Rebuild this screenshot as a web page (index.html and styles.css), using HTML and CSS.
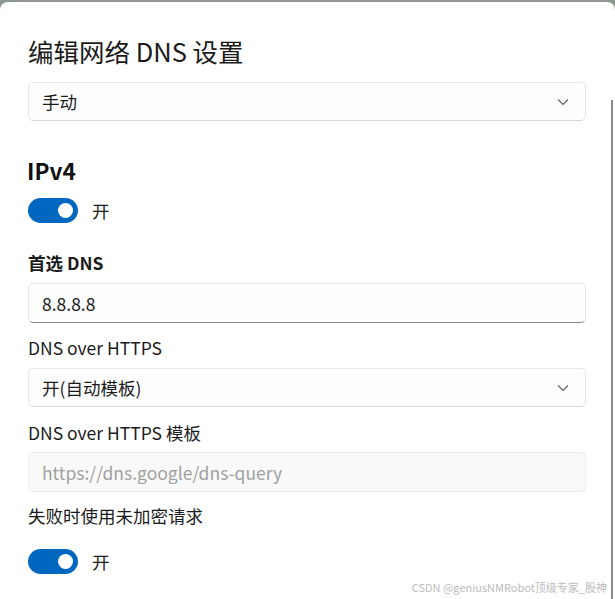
FILE: index.html
```html
<!DOCTYPE html>
<html lang="zh-CN">
<head>
<meta charset="utf-8">
<title>编辑网络 DNS 设置</title>
<link rel="stylesheet" href="styles.css">
</head>
<body>
<div class="panel">
  <h1 class="title">编辑网络 DNS 设置</h1>
  <div class="select sel-mode">
    <span>手动</span>
    <svg class="chev" width="12" height="8" viewBox="0 0 12 8"><path d="M1 1.5 L6 6.5 L11 1.5" fill="none" stroke="#5c5c5c" stroke-width="1.1"/></svg>
  </div>

  <h2 class="section">IPv4</h2>
  <div class="toggle-row t1">
    <span class="toggle"><span class="knob"></span></span>
    <span class="toggle-label">开</span>
  </div>

  <div class="label strong l1">首选 DNS</div>
  <div class="input">8.8.8.8</div>

  <div class="label l2">DNS over HTTPS</div>
  <div class="select">
    <span>开(自动模板)</span>
    <svg class="chev" width="12" height="8" viewBox="0 0 12 8"><path d="M1 1.5 L6 6.5 L11 1.5" fill="none" stroke="#5c5c5c" stroke-width="1.1"/></svg>
  </div>

  <div class="label l3">DNS over HTTPS 模板</div>
  <div class="input disabled">https://dns.google/dns-query</div>

  <div class="label l4">失败时使用未加密请求</div>
  <div class="toggle-row t2">
    <span class="toggle"><span class="knob"></span></span>
    <span class="toggle-label">开</span>
  </div>
</div>
<div class="scrollbar"></div>
<div class="watermark">CSDN @geniusNMRobot顶级专家_股神</div>
</body>
</html>
```

FILE: styles.css
```css
html, body {
  margin: 0;
  padding: 0;
}
body {
  width: 615px;
  height: 599px;
  overflow: hidden;
  background: #8e988f;
  font-family: "Noto Sans CJK SC", "Noto Sans", sans-serif;
  color: #1b1b1b;
  position: relative;
}
.panel {
  margin-top: 2px;
  height: 597px;
  box-sizing: border-box;
  background: #ffffff;
  border-radius: 8px 8px 0 0;
  padding: 33px 29px 0 28px;
}
.title {
  margin: 0;
  font-size: 25.5px;
  line-height: 32px;
  font-weight: 400;
  color: #1a1a1a;
}
.select, .input {
  box-sizing: border-box;
  border: 1px solid #e6e6e6;
  border-radius: 5px;
  background: #fdfdfd;
  font-size: 17.5px;
  display: flex;
  align-items: center;
  padding: 0 16px 0 13px;
}
.select {
  height: 39px;
  justify-content: space-between;
  border-bottom-color: #d6d6d6;
}
.sel-mode {
  margin-top: 15px;
}
.chev {
  display: block;
}
.section {
  margin: 35px 0 0 -1px;
  font-size: 22.5px;
  line-height: 28px;
  font-weight: 600;
  color: #111;
}
.toggle-row {
  display: flex;
  align-items: center;
  gap: 14px;
}
.t1 { margin-top: 14px; }
.t2 { margin-top: 23px; }
.toggle {
  width: 50px;
  height: 25px;
  border-radius: 13px;
  background: #0067c0;
  display: flex;
  align-items: center;
  justify-content: flex-end;
  padding-right: 5px;
  box-sizing: border-box;
}
.knob {
  width: 15px;
  height: 15px;
  border-radius: 50%;
  background: #ffffff;
}
.toggle-label {
  font-size: 17.5px;
  line-height: 20px;
}
.label {
  font-size: 17.5px;
  line-height: 20px;
}
.strong { font-weight: 600; }
.l1 { margin-top: 30px; margin-bottom: 10px; }
.l2 { margin-top: 15px; margin-bottom: 10px; }
.l3 { margin-top: 16px; margin-bottom: 9px; }
.l4 { margin-top: 14px; }
.input {
  height: 40px;
  border-bottom-color: #8a8a8a;
}
.input.disabled {
  background: #f9f9f9;
  border-color: #ececec;
  color: #a0a0a0;
}
.scrollbar {
  position: absolute;
  left: 611px;
  top: 100px;
  width: 2px;
  height: 499px;
  background: #8a8a8a;
}
.watermark {
  position: absolute;
  right: 8px;
  bottom: 5px;
  font-size: 11px;
  line-height: 14px;
  color: #bcbcbc;
}
```
